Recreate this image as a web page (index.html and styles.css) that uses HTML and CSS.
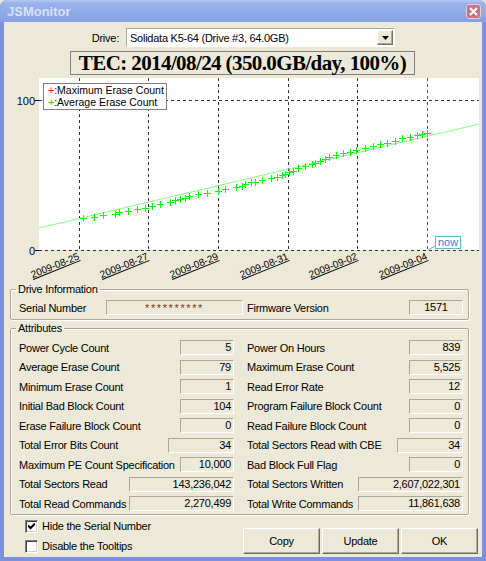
FILE: index.html
```html
<!DOCTYPE html>
<html>
    <head>
        <meta http-equiv="content-type" content="text/html; charset=utf-8" />
        <title>JSMonitor</title>
        <link rel="stylesheet" href="styles.css">
    </head>
    <body>
        <div class="window">
            <div class="titlebar">
                <span class="title">JSMonitor</span>
                <span class="close">
                    <svg width="9" height="9" viewBox="0 0 9 9"><path d="M1 1L8 8M8 1L1 8" stroke="#fff" stroke-width="2"/></svg>
                </span>
            </div>
            <div class="client">
                <div class="drive-row">
                    <label for="drive">Drive:</label>
                    <div class="combo" id="drive">
                        <span class="combo-text">Solidata K5-64 (Drive #3, 64.0GB)</span>
                        <span class="combo-btn">
                            <svg width="7" height="4" viewBox="0 0 7 4"><path d="M0 0h7L3.5 4z" fill="#000"/></svg>
                        </span>
                    </div>
                </div>
                <div class="tec">TEC: 2014/08/24 (350.0GB/day, 100%)</div>

                <svg class="chart" width="478" height="208" viewBox="4 75 478 208">
                    <rect x="39" y="78" width="440" height="172" fill="#fff"/>
                    <g class="grid" stroke="#333" stroke-dasharray="3 3" shape-rendering="crispEdges">
                        <line x1="79.5" y1="78" x2="79.5" y2="250"/>
                        <line x1="148.5" y1="78" x2="148.5" y2="250"/>
                        <line x1="218.5" y1="78" x2="218.5" y2="250"/>
                        <line x1="288.5" y1="78" x2="288.5" y2="250"/>
                        <line x1="357.5" y1="78" x2="357.5" y2="250"/>
                        <line x1="427.5" y1="78" x2="427.5" y2="250" stroke="#2f6470"/>
                        <line x1="39" y1="100.5" x2="479" y2="100.5"/>
                        <line x1="39" y1="250.5" x2="479" y2="250.5"/>
                    </g>
                    <g stroke="#000040" shape-rendering="crispEdges">
                        <line x1="35" y1="100.5" x2="39" y2="100.5"/>
                        <line x1="35" y1="250.5" x2="39" y2="250.5"/>
                    </g>
                    <g class="axis-label" text-anchor="end">
                        <text x="35" y="105">100</text>
                        <text x="35" y="255">0</text>
                    </g>

                    <line x1="39" y1="228" x2="479" y2="124" stroke="#80ff80"/>
                    <path id="points" d="" stroke="#00ff00" fill="none" shape-rendering="crispEdges"/>

                    <rect x="43.5" y="83.5" width="123" height="26" fill="#fff" stroke="#808080"/>
                    <text class="legend" x="48" y="94"><tspan fill="#ff0000">+</tspan>:Maximum Erase Count</text>
                    <text class="legend" x="48" y="106"><tspan fill="#00dd00">+</tspan>:Average Erase Count</text>

                    <line x1="428" y1="250" x2="435" y2="246" stroke="#4fb5c8"/>
                    <rect x="435.5" y="236.5" width="25" height="12" fill="#fff" stroke="#5bbdd0"/>
                    <text class="now" x="448" y="246" text-anchor="middle">now</text>

                    <g class="dates" text-anchor="end">
                        <text transform="translate(80 259) rotate(-22)">2009-08-25</text>
                        <text transform="translate(149 259) rotate(-22)">2009-08-27</text>
                        <text transform="translate(219 259) rotate(-22)">2009-08-29</text>
                        <text transform="translate(289 259) rotate(-22)">2009-08-31</text>
                        <text transform="translate(358 259) rotate(-22)">2009-09-02</text>
                        <text transform="translate(428 259) rotate(-22)">2009-09-04</text>
                    </g>
                </svg>

                <fieldset class="group info">
                    <legend>Drive Information</legend>
                    <div class="info-row">
                        <span>Serial Number</span>
                        <span class="val serial">**********</span>
                        <span class="info-label">Firmware Version</span>
                        <span class="val center">1571</span>
                    </div>
                </fieldset>

                <fieldset class="group attrs">
                    <legend>Attributes</legend>
                    <div class="attr-grid">
                        <div class="attr"><span>Power Cycle Count</span><span class="val s">5</span></div>
                        <div class="attr"><span>Power On Hours</span><span class="val s">839</span></div>
                        <div class="attr"><span>Average Erase Count</span><span class="val s">79</span></div>
                        <div class="attr"><span>Maximum Erase Count</span><span class="val s">5,525</span></div>
                        <div class="attr"><span>Minimum Erase Count</span><span class="val s">1</span></div>
                        <div class="attr"><span>Read Error Rate</span><span class="val s">12</span></div>
                        <div class="attr"><span>Initial Bad Block Count</span><span class="val s">104</span></div>
                        <div class="attr"><span>Program Failure Block Count</span><span class="val s">0</span></div>
                        <div class="attr"><span>Erase Failure Block Count</span><span class="val s">0</span></div>
                        <div class="attr"><span>Read Failure Block Count</span><span class="val s">0</span></div>
                        <div class="attr"><span>Total Error Bits Count</span><span class="val m">34</span></div>
                        <div class="attr"><span>Total Sectors Read with CBE</span><span class="val m">34</span></div>
                        <div class="attr"><span>Maximum PE Count Specification</span><span class="val s">10,000</span></div>
                        <div class="attr"><span>Bad Block Full Flag</span><span class="val s">0</span></div>
                        <div class="attr"><span>Total Sectors Read</span><span class="val l">143,236,042</span></div>
                        <div class="attr"><span>Total Sectors Written</span><span class="val l">2,607,022,301</span></div>
                        <div class="attr"><span>Total Read Commands</span><span class="val l">2,270,499</span></div>
                        <div class="attr"><span>Total Write Commands</span><span class="val l">11,861,638</span></div>
                    </div>
                </fieldset>

                <div class="footer">
                    <div class="checks">
                        <label class="check">
                            <span class="box">
                                <svg width="7" height="7" viewBox="0 0 7 7"><path d="M0 2.5l2.5 2.5L7 0.5" stroke="#000" stroke-width="2" fill="none"/></svg>
                            </span>
                            Hide the Serial Number
                        </label>
                        <label class="check"><span class="box"></span>Disable the Tooltips</label>
                    </div>
                    <div class="buttons">
                        <button class="btn">Copy</button>
                        <button class="btn">Update</button>
                        <button class="btn">OK</button>
                    </div>
                </div>
            </div>
        </div>
        <script>
            // average erase count samples, page coordinates
            const pts = [
                [83,218],[94,217],[103,215],[115,214],[119,212],[128,211],[137,209],[145,208],
                [152,206],[160,204],[170,202],[175,200],[180,199],[185,198],[189,196],[198,194],
                [207,193],[218,191],[225,189],[236,187],[242,186],[245,184],[251,182],[255,182],
                [262,180],[271,178],[277,177],[282,175],[285,174],[289,172],[293,171],[298,168],
                [305,166],[312,164],[315,163],[320,161],[325,159],[329,157],[336,155],[343,153],
                [350,152],[356,150],[365,148],[373,146],[380,144],[387,143],[395,141],[402,138],
                [410,137],[417,135],[422,134],[427,133]
            ];
            let d = "";
            for (const [x, y] of pts) {
                d += `M${x - 3} ${y + 0.5}h7M${x + 0.5} ${y - 3}v7`;
            }
            document.querySelector("#points").setAttribute("d", d);
        </script>
    </body>
</html>
```

FILE: styles.css
```css
* {
    box-sizing: border-box;
}

body {
    margin: 0;
    font-family: "Liberation Sans", Arial, sans-serif;
    font-size: 11px;
    letter-spacing: -0.25px;
    color: #000;
    background: #ece9d8;
}

.window {
    width: 486px;
    height: 561px;
    display: flex;
    flex-direction: column;
    background: #7d90dc;
    border-radius: 7px 7px 0 0;
    overflow: hidden;
}

.titlebar {
    flex: none;
    height: 22px;
    display: flex;
    align-items: center;
    justify-content: space-between;
    padding: 0 5px 0 7px;
    background: linear-gradient(#b6c8f3, #9ab2ec 15%, #8fa9e8 60%, #879fe1);
}

.title {
    font-size: 13px;
    font-weight: bold;
    letter-spacing: 0;
    color: #d8e3f8;
}

.close {
    width: 15px;
    height: 15px;
    display: flex;
    align-items: center;
    justify-content: center;
    background: #c27686;
    border: 1px solid #edc9d0;
    border-radius: 3px;
}

.client {
    flex: 1;
    margin: 0 4px 4px;
    background: #ece9d8;
}

/* drive selector */
.drive-row {
    display: flex;
    align-items: center;
    padding-top: 6px;
}

.drive-row label {
    width: 115px;
    text-align: right;
    margin-right: 7px;
}

.combo {
    width: 269px;
    height: 19px;
    display: flex;
    align-items: center;
    justify-content: space-between;
    background: #fff;
    border: 1px solid;
    border-color: #aca899 #fff #fff #aca899;
}

.combo-text {
    padding-left: 3px;
}

.combo-btn {
    width: 16px;
    height: 15px;
    margin-right: 1px;
    display: flex;
    align-items: center;
    justify-content: center;
    background: #ece9d8;
    border: 1px solid;
    border-color: #fff #716f64 #716f64 #fff;
    box-shadow: inset -1px -1px #aca899;
}

.tec {
    width: 345px;
    height: 24px;
    margin: 4px 0 0 66px;
    border: 1px solid #808080;
    font-family: "Liberation Serif", "Times New Roman", serif;
    font-size: 21px;
    font-weight: bold;
    letter-spacing: -0.6px;
    line-height: 22px;
    text-align: center;
}

/* chart */
.chart {
    display: block;
}

.chart text {
    font-family: "Liberation Sans", Arial, sans-serif;
    letter-spacing: 0;
}

.axis-label {
    font-size: 11px;
    fill: #000040;
}

.legend {
    font-size: 10.5px;
    fill: #000;
}

.now {
    font-size: 11px;
    fill: #3f7fc8;
}

.dates {
    font-size: 10px;
    text-decoration: underline;
}

/* group boxes */
.group {
    margin: 0 13px 0 6px;
    padding: 0 5px 0 8px;
    border: 1px solid #aca899;
    border-radius: 2px;
    box-shadow: inset 1px 1px #fff, 1px 1px #fff;
}

.group legend {
    padding: 0 2px;
    margin-left: -3px;
    line-height: 13px;
}

.info-row {
    display: grid;
    grid-template-columns: 87px 137px 1fr 54px;
    align-items: center;
    padding: 4px 0 4px;
}

.info-label {
    padding-left: 4px;
}

.val {
    height: 15px;
    line-height: 13px;
    padding-right: 2px;
    text-align: right;
    white-space: nowrap;
    border: 1px solid;
    border-color: #aca899 #fff #fff #aca899;
}

.val.center {
    padding: 0;
    text-align: center;
}

.serial {
    padding: 0;
    text-align: center;
    color: #7a3a10;
    letter-spacing: 1.6px;
    line-height: 15px;
}

.attrs {
    margin-top: 2px;
}

.attr-grid {
    display: grid;
    grid-template-columns: 215px 216px;
    grid-auto-rows: 19.5px;
    column-gap: 13px;
    padding: 3px 0 0;
}

.attr {
    display: flex;
    align-items: center;
    justify-content: space-between;
    white-space: nowrap;
}

.val.s {
    width: 54px;
}

.val.m {
    width: 66px;
}

.val.l {
    width: 105px;
}

/* bottom */
.footer {
    display: flex;
    justify-content: space-between;
    padding: 5px 4px 0 21px;
}

.checks {
    display: flex;
    flex-direction: column;
    gap: 7px;
}

.check {
    display: flex;
    align-items: center;
    gap: 4px;
    height: 13px;
}

.box {
    width: 13px;
    height: 13px;
    display: flex;
    align-items: center;
    justify-content: center;
    background: #fff;
    border: 1px solid;
    border-color: #808080 #fff #fff #808080;
    box-shadow: inset 1px 1px #404040, inset -1px -1px #d4d0c8;
}

.buttons {
    display: flex;
    gap: 2px;
    margin-top: 8px;
}

.btn {
    width: 77px;
    height: 26px;
    padding: 0;
    font-family: "Liberation Sans", Arial, sans-serif;
    font-size: 11px;
    letter-spacing: -0.25px;
    color: #000;
    background: #ece9d8;
    border: 1px solid;
    border-color: #fff #716f64 #716f64 #fff;
    box-shadow: inset -1px -1px #aca899;
}
```
